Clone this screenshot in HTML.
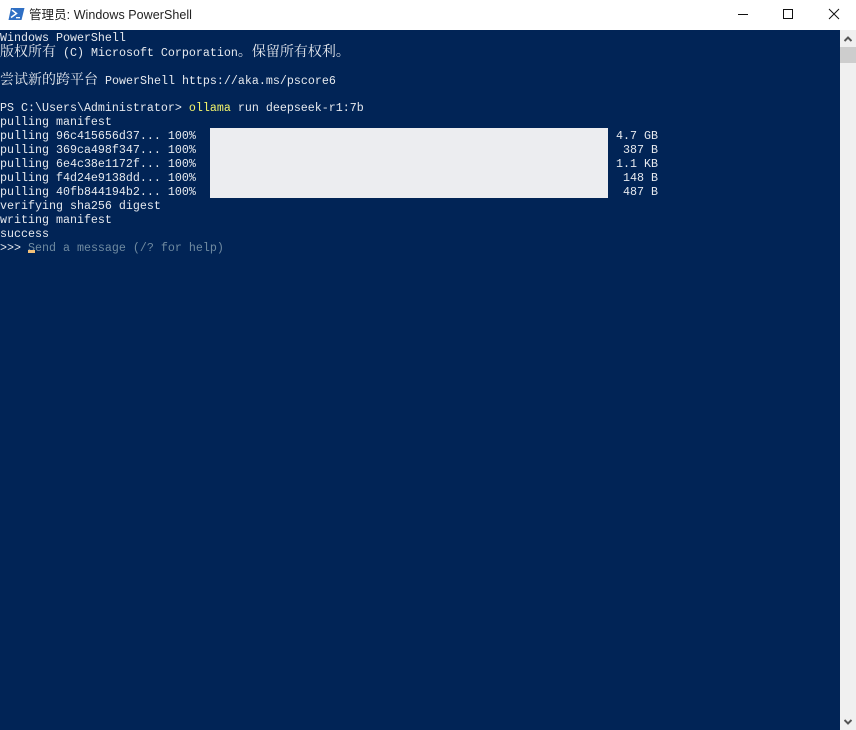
<!DOCTYPE html>
<html>
<head>
<meta charset="utf-8">
<style>
html,body{margin:0;padding:0;width:856px;height:730px;overflow:hidden;background:#fff}
#title{position:absolute;left:29px;top:7px;font:12.5px/16px "Liberation Sans","Noto Sans CJK SC",sans-serif;letter-spacing:.05px;color:#222;white-space:pre}
#term{position:absolute;left:0;top:30px;width:840px;height:700px;background:#012456;overflow:hidden}
.r{position:absolute;left:0;height:14px;margin-top:1px;font:11.67px/14px "Liberation Mono","Noto Serif CJK SC",monospace;color:#e6e9ee;white-space:pre}
.c{font:14px/0 "Noto Serif CJK SC","Noto Sans CJK SC",serif}
.y{color:#f5f56a}
.g{color:#6f8aa0}
#bar{position:absolute;left:210px;top:98px;width:398px;height:70px;background:#ecedf0}
#cur{position:absolute;left:28px;top:220px;width:7px;height:3px;background:#f2c078}
#sb{position:absolute;left:840px;top:30px;width:16px;height:700px;background:#f0f0f0}
#th{position:absolute;left:0;top:17px;width:16px;height:16px;background:#cdcdcd}
svg{position:absolute}
</style>
</head>
<body>
<svg style="left:8px;top:7px" width="17" height="14" viewBox="0 0 17 14">
<path d="M3 1H16.5L13.5 13H0.5Z" fill="#2f6fc4"/>
<path d="M4 3L8.5 6.5L3 10.5" fill="none" stroke="#fff" stroke-width="1.5"/>
<path d="M8 10.7H12" fill="none" stroke="#fff" stroke-width="1.3"/>
</svg>
<div id="title">管理员: Windows PowerShell</div>
<svg style="left:738px;top:8px" width="110" height="14" viewBox="0 0 110 14" fill="none" stroke="#111" stroke-width="1">
<path d="M0 6.5H10"/>
<rect x="45.5" y="1.5" width="9" height="9"/>
<path d="M91 1L101 11M101 1L91 11"/>
</svg>
<div id="term">
<div id="bar"></div>
<div class="r" style="top:0">Windows PowerShell</div>
<div class="r" style="top:15px"><span class="c">版权所有</span> (C) Microsoft Corporation<span class="c">。保留所有权利。</span></div>
<div class="r" style="top:43px"><span class="c">尝试新的跨平台</span> PowerShell https://aka.ms/pscore6</div>
<div class="r" style="top:70px">PS C:\Users\Administrator&gt; <span class="y">ollama</span> run deepseek-r1:7b</div>
<div class="r" style="top:84px">pulling manifest</div>
<div class="r" style="top:98px">pulling 96c415656d37... 100%</div>
<div class="r" style="top:112px">pulling 369ca498f347... 100%</div>
<div class="r" style="top:126px">pulling 6e4c38e1172f... 100%</div>
<div class="r" style="top:140px">pulling f4d24e9138dd... 100%</div>
<div class="r" style="top:154px">pulling 40fb844194b2... 100%</div>
<div class="r" style="top:98px;left:616px">4.7 GB</div>
<div class="r" style="top:112px;left:623px">387 B</div>
<div class="r" style="top:126px;left:616px">1.1 KB</div>
<div class="r" style="top:140px;left:623px">148 B</div>
<div class="r" style="top:154px;left:623px">487 B</div>
<div class="r" style="top:168px">verifying sha256 digest</div>
<div class="r" style="top:182px">writing manifest</div>
<div class="r" style="top:196px">success</div>
<div class="r" style="top:210px">&gt;&gt;&gt; <span class="g">Send a message (/? for help)</span></div>
<div id="cur"></div>
</div>
<div id="sb">
<svg style="left:4px;top:6px" width="8" height="6" viewBox="0 0 8 6"><path d="M0.5 5L4 1.5L7.5 5" fill="none" stroke="#555" stroke-width="2"/></svg>
<div id="th"></div>
<svg style="left:4px;top:689px" width="8" height="6" viewBox="0 0 8 6"><path d="M0.5 1L4 4.5L7.5 1" fill="none" stroke="#555" stroke-width="2"/></svg>
</div>
</body>
</html>
